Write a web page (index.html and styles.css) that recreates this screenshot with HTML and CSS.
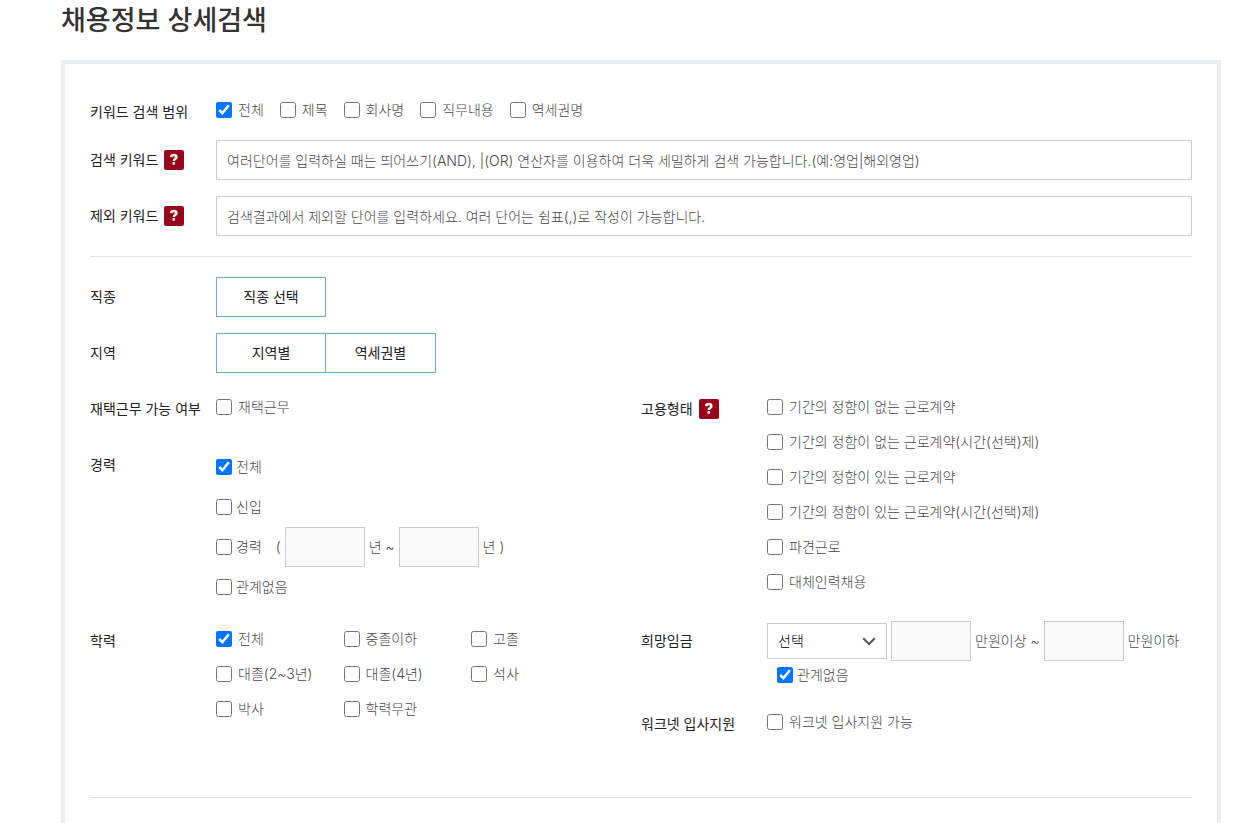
FILE: index.html
```html
<!DOCTYPE html>
<html lang="ko">
<head>
<meta charset="utf-8">
<meta name="viewport" content="width=device-width, initial-scale=1">
<title>채용정보 상세검색</title>
<link rel="stylesheet" href="styles.css">
</head>
<body>
<svg width="0" height="0" class="sprite" aria-hidden="true">
  <symbol id="question" viewBox="0 0 20 20">
    <path d="M7.100 7.200C7.300 5.700 8.300 5 9.700 5c1.700 0 2.700.9 2.700 2.200 0 1.700-2.700 1.800-2.700 3.700" fill="none" stroke="#fff" stroke-width="2.500"/>
    <rect x="8.400" y="11.900" width="2.600" height="2.800" rx="1" fill="#fff"/>
  </symbol>
</svg>
<main class="page">
  <h1 class="title">채용정보 상세검색</h1>
  <form class="panel">
    <div class="row row-scope">
      <div class="label">키워드 검색 범위</div>
      <div class="inline-checks">
        <label class="check"><input type="checkbox" checked>전체</label>
        <label class="check"><input type="checkbox">제목</label>
        <label class="check"><input type="checkbox">회사명</label>
        <label class="check"><input type="checkbox">직무내용</label>
        <label class="check"><input type="checkbox">역세권명</label>
      </div>
    </div>
    <div class="row">
      <div class="label"><label for="keyword">검색 키워드</label><button type="button" class="help" aria-label="도움말"><svg><use href="#question"/></svg></button></div>
      <input class="text" id="keyword" type="text" placeholder="여러단어를 입력하실 때는 띄어쓰기(AND), |(OR) 연산자를 이용하여 더욱 세밀하게 검색 가능합니다.(예:영업|해외영업)">
    </div>
    <div class="row">
      <div class="label"><label for="exclude">제외 키워드</label><button type="button" class="help" aria-label="도움말"><svg><use href="#question"/></svg></button></div>
      <input class="text" id="exclude" type="text" placeholder="검색결과에서 제외할 단어를 입력하세요. 여러 단어는 쉼표(,)로 작성이 가능합니다.">
    </div>
    <hr class="rule">
    <div class="row">
      <div class="label">직종</div>
      <div class="buttons"><button type="button" class="pick">직종 선택</button></div>
    </div>
    <div class="row">
      <div class="label">지역</div>
      <div class="buttons"><button type="button" class="pick">지역별</button><button type="button" class="pick">역세권별</button></div>
    </div>
    <div class="columns">
      <div class="column">
        <div class="row">
          <div class="label">재택근무 가능 여부</div>
          <div class="checks"><label class="check"><input type="checkbox">재택근무</label></div>
        </div>
        <div class="row row-career">
          <div class="label">경력</div>
          <div class="career">
            <div class="line"><label class="check check-tight"><input type="checkbox" checked>전체</label></div>
            <div class="line"><label class="check check-tight"><input type="checkbox">신입</label></div>
            <div class="line">
              <label class="check check-tight"><input type="checkbox">경력</label>
              <span class="open">(</span><input class="text short" type="text" aria-label="최소 경력" disabled><span class="unit">년 ~</span><input class="text short" type="text" aria-label="최대 경력" disabled><span class="unit">년 )</span>
            </div>
            <div class="line"><label class="check check-tight"><input type="checkbox">관계없음</label></div>
          </div>
        </div>
        <div class="row">
          <div class="label">학력</div>
          <div class="checks checks-three">
            <label class="check"><input type="checkbox" checked>전체</label>
            <label class="check"><input type="checkbox">중졸이하</label>
            <label class="check"><input type="checkbox">고졸</label>
            <label class="check"><input type="checkbox">대졸(2~3년)</label>
            <label class="check"><input type="checkbox">대졸(4년)</label>
            <label class="check"><input type="checkbox">석사</label>
            <label class="check"><input type="checkbox">박사</label>
            <label class="check"><input type="checkbox">학력무관</label>
          </div>
        </div>
      </div>
      <div class="column">
        <div class="row row-type">
          <div class="label">고용형태<button type="button" class="help" aria-label="도움말"><svg><use href="#question"/></svg></button></div>
          <div class="checks">
            <label class="check"><input type="checkbox">기간의 정함이 없는 근로계약</label>
            <label class="check"><input type="checkbox">기간의 정함이 없는 근로계약(시간(선택)제)</label>
            <label class="check"><input type="checkbox">기간의 정함이 있는 근로계약</label>
            <label class="check"><input type="checkbox">기간의 정함이 있는 근로계약(시간(선택)제)</label>
            <label class="check"><input type="checkbox">파견근로</label>
            <label class="check"><input type="checkbox">대체인력채용</label>
          </div>
        </div>
        <div class="row row-wage">
          <div class="label"><label for="wage">희망임금</label></div>
          <div class="wage">
            <div class="wage-line">
              <div class="select-box">
                <select id="wage" class="select"><option>선택</option></select>
                <svg class="arrow" viewBox="0 0 14 9" aria-hidden="true"><path d="M1.200 1.200l5.800 5.800 5.800-5.800" fill="none" stroke="#555" stroke-width="2"/></svg>
              </div>
              <input class="text short" type="text" aria-label="최소 임금" disabled>
              <span>만원이상 ~</span>
              <input class="text short" type="text" aria-label="최대 임금" disabled>
              <span>만원이하</span>
            </div>
            <label class="check check-tight any-wage"><input type="checkbox" checked>관계없음</label>
          </div>
        </div>
        <div class="row">
          <div class="label">워크넷 입사지원</div>
          <div class="checks"><label class="check"><input type="checkbox">워크넷 입사지원 가능</label></div>
        </div>
      </div>
    </div>
    <hr class="rule">
  </form>
</main>
</body>
</html>
```
FILE: styles.css
```css
* {
  box-sizing: border-box;
}

body {
  margin: 0;
  background: #fff;
  color: #484848;
  font-family: Inter, "Noto Sans CJK KR", sans-serif;
  font-size: 14px;
  font-weight: 300;
  line-height: 20px;
}

input,
button,
select {
  margin: 0;
  font: inherit;
}

.sprite {
  position: absolute;
}

.page {
  display: flex;
  flex-direction: column;
  height: 100vh;
  padding: 0 17px 0 61px;
}

.title {
  margin: 0 0 18px;
  color: #333;
  font-size: 27px;
  font-weight: 500;
  line-height: 42px;
}

.panel {
  flex: 1;
  padding: 28px 25px 0;
  border: 4px solid #eceff2;
  border-bottom: 0;
}

.row {
  display: grid;
  grid-template-columns: 126px minmax(0, 1fr);
  align-items: start;
  margin-bottom: 16px;
}

.row-scope {
  margin-bottom: 8px;
}

.label {
  display: flex;
  align-items: center;
  gap: 6px;
  height: 40px;
  color: #222;
  font-weight: 400;
  white-space: nowrap;
}

.help {
  width: 20px;
  height: 20px;
  padding: 0;
  border: 0;
  border-radius: 2px;
  background: #9b0519;
}

.help svg {
  display: block;
  width: 20px;
  height: 20px;
}

.inline-checks {
  display: flex;
  gap: 16px;
  padding-top: 8px;
}

.check {
  display: flex;
  align-items: center;
  gap: 6px;
  height: 20px;
  white-space: nowrap;
}

.check-tight {
  gap: 4px;
}

.check input {
  flex: none;
  width: 16px;
  height: 16px;
}

.text {
  width: 100%;
  height: 40px;
  padding: 0 10px;
  border: 1px solid #ccc;
  background: #fff;
  color: #333;
}

.text::placeholder {
  color: #484848;
}

.short {
  width: 80px;
  background: #fafafa;
}

.rule {
  height: 1px;
  margin: 20px 0;
  border: 0;
  background: #dde3e8;
}

.buttons {
  display: flex;
}

.pick {
  width: 110px;
  height: 40px;
  padding: 0;
  border: 1px solid #67b0cb;
  background: #fff;
  color: #222;
  font-weight: 400;
}

.pick + .pick {
  width: 111px;
  margin-left: -1px;
}

.columns {
  display: grid;
  grid-template-columns: 1fr 1fr;
  margin-bottom: 53px;
}

.column > .row:last-child {
  margin-bottom: 0;
}

.checks {
  display: grid;
  row-gap: 15px;
  padding-top: 8px;
}

.checks-three {
  grid-template-columns: repeat(3, 30%);
}

.row-career {
  margin-bottom: 14px;
}

.career {
  padding-top: 2px;
}

.line {
  display: flex;
  align-items: center;
  height: 40px;
}

.open {
  padding: 0 4px 0 14px;
}

.unit {
  padding: 0 4px;
}

.row-type {
  margin-bottom: 29px;
}

.row-wage {
  margin-bottom: 19px;
}

.wage-line {
  display: flex;
  align-items: center;
  gap: 4px;
  white-space: nowrap;
}

.select-box {
  position: relative;
  width: 120px;
}

.select {
  display: block;
  width: 100%;
  height: 36px;
  padding: 0 10px;
  border: 1px solid #ccc;
  border-radius: 0;
  appearance: none;
  background: #fff;
  color: #000;
}

.arrow {
  position: absolute;
  top: 14px;
  right: 11px;
  width: 14px;
  height: 9px;
  pointer-events: none;
}

.any-wage {
  margin: 4px 0 0 10px;
}
```
